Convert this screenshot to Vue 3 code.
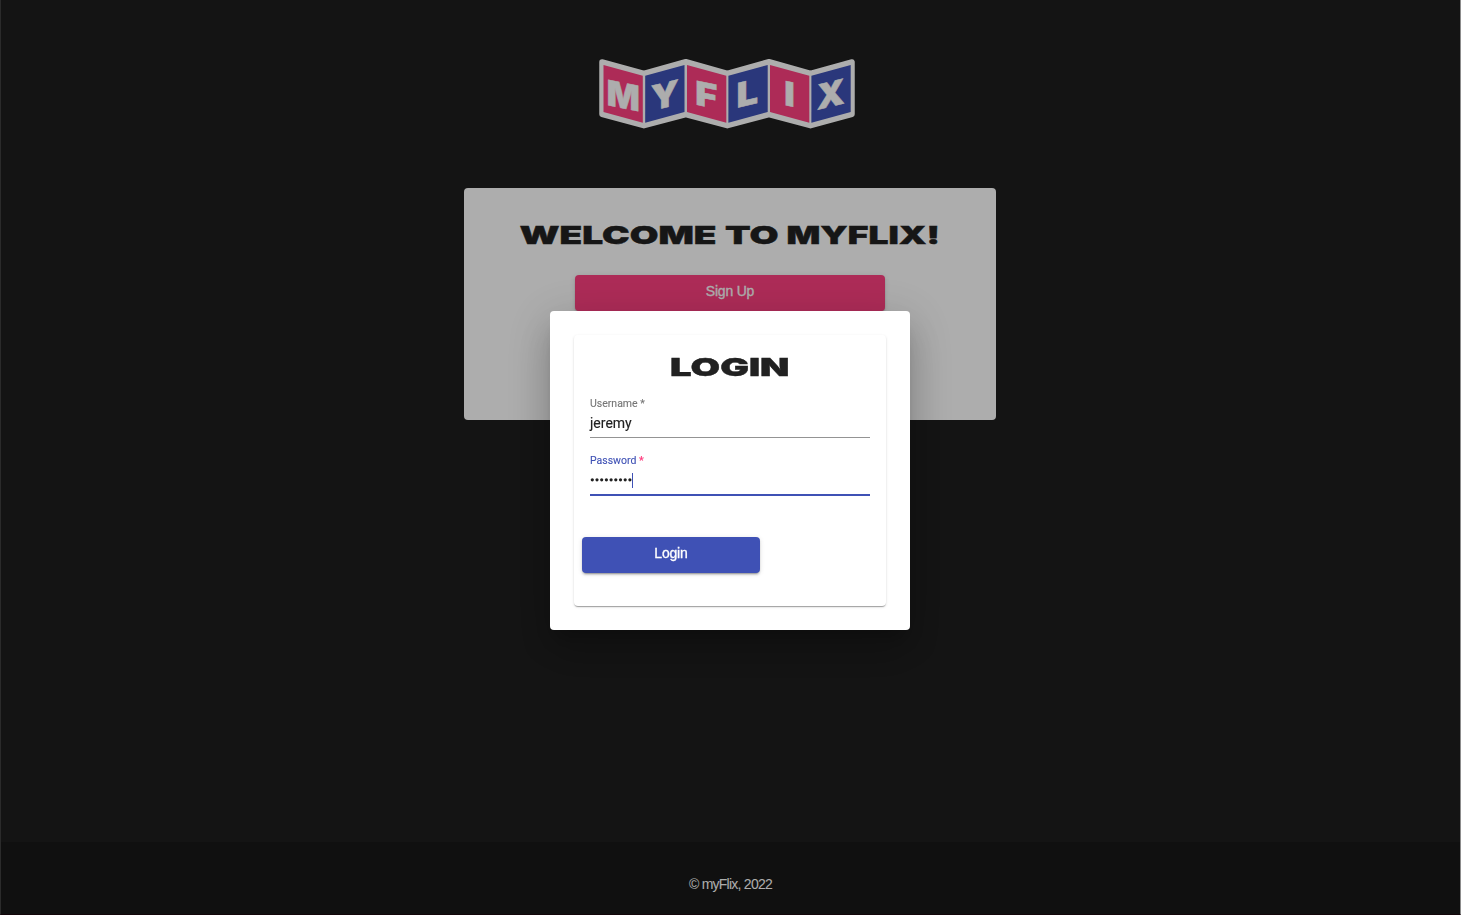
<script setup>
const panels = [
  { ch: 'M', x: 603.5, down: true, cx: 623.2, base: 108.2, w: 33, size: 35 },
  { ch: 'Y', x: 645.2, down: false, cx: 664.8, base: 107.7, w: 28, size: 34.5 },
  { ch: 'F', x: 687, down: true, cx: 706.2, base: 106.8, w: 22, size: 33 },
  { ch: 'L', x: 728.4, down: false, cx: 747.2, base: 105.5, w: 21.5, size: 34 },
  { ch: 'I', x: 770, down: true, cx: 789.5, base: 106, w: 10.5, size: 33.5 },
  { ch: 'X', x: 811.4, down: false, cx: 830.7, base: 106.6, w: 28, size: 34.5 },
]
const words = [
  { t: 'WELCOME', x: -0.5, w: 197 },
  { t: 'TO', x: 205, w: 53.5 },
  { t: 'MYFLIX!', x: 266.5, w: 153.5 },
]
const shape = (p) => {
  const l = p.down ? 65 : 75.7
  const r = p.down ? 75.7 : 65
  return `${p.x},${l} ${p.x + 39.3},${r} ${p.x + 39.3},${r + 47} ${p.x},${l + 47}`
}
const matrix = (p) => `matrix(1 ${p.down ? 0.2 : -0.24} 0 1 ${p.cx} ${p.base})`
</script>

<template>
  <div class="page">
    <header class="top">
      <svg class="logo" viewBox="597 56 260 75" width="260" height="75">
        <path
          class="frame"
          d="M602 62 L643.9 73.3 L685.8 61.7 L727.3 73.3 L769 61.7 L810.5 73.3 L852 62 L852 114.3 L810.5 125.7 L769 114.5 L727.3 125.7 L685.8 114.5 L643.9 125.7 L602 114.3 Z"
        />
        <g v-for="p in panels" :key="p.ch">
          <polygon :class="p.down ? 'pink' : 'blue'" :points="shape(p)" />
          <text
            class="letter"
            :transform="matrix(p)"
            text-anchor="middle"
            :font-size="p.size"
            :textLength="p.w"
            lengthAdjust="spacingAndGlyphs"
          >{{ p.ch }}</text>
        </g>
      </svg>
    </header>

    <main class="main">
      <section class="welcome">
        <svg class="wide-title" width="422" height="30" viewBox="0 0 422 30">
          <text
            v-for="w in words"
            :key="w.t"
            :x="w.x + 1"
            y="24"
            font-size="24.5"
            :textLength="w.w"
            lengthAdjust="spacingAndGlyphs"
          >{{ w.t }}</text>
        </svg>
        <button class="btn accent">Sign Up</button>
      </section>
    </main>

    <footer class="footer">© myFlix, 2022</footer>

    <div class="backdrop">
      <div class="dialog">
        <div class="card">
          <svg class="wide-title" width="122" height="30" viewBox="0 0 122 30">
            <text x="1" y="24" font-size="24.5" textLength="119.5" lengthAdjust="spacingAndGlyphs">LOGIN</text>
          </svg>
          <div class="field">
            <span class="label">Username *</span>
            <span class="value">jeremy</span>
          </div>
          <div class="field focused">
            <span class="label">Password <b>*</b></span>
            <span class="value">
              <svg class="dots" width="42" height="6" viewBox="0 0 42 6">
                <circle v-for="n in 9" :key="n" :cx="2.3 + (n - 1) * 4.7" cy="2.8" r="1.6" />
              </svg>
              <i class="caret"></i>
            </span>
          </div>
          <button class="btn primary">Login</button>
        </div>
      </div>
    </div>
  </div>
</template>

<style>
body { margin: 0; background: #1e1e1e; overflow: hidden; }
</style>

<style scoped>
.page {
  box-sizing: border-box;
  height: 915px;
  display: flex;
  flex-direction: column;
  background: #1e1e1e;
  border-left: 1px solid #404040;
  border-right: 1px solid #cfcfcf;
  border-bottom: 1px solid #1c080f;
  font-family: "Liberation Sans", Arial, sans-serif;
}
.top { display: flex; justify-content: center; padding: 56px 7px 0 0; height: 132px; box-sizing: content-box; }
.logo { display: block; }
.frame { fill: #fff; stroke: #fff; stroke-width: 5.5; stroke-linejoin: round; }
.pink { fill: #ff4081; }
.blue { fill: #3f51b5; }
.letter { fill: #fff; font-family: Inter, sans-serif; font-weight: 900; stroke: #fff; stroke-width: 0.5; }
.main { flex: 1; display: flex; justify-content: center; align-items: flex-start; padding-right: 1px; }
.welcome {
  box-sizing: border-box;
  width: 532px;
  height: 232px;
  padding-top: 32px;
  border-radius: 4px;
  background: #fff;
  display: flex;
  flex-direction: column;
  align-items: center;
}
.wide-title { display: block; flex: none; fill: #212121; font-family: Inter, sans-serif; font-weight: 900; stroke: #212121; stroke-width: 0.4; }
.btn {
  box-sizing: border-box;
  height: 36px;
  border: 0;
  border-radius: 4px;
  padding: 0 0 4px;
  color: #fff;
  font: 14px "Liberation Sans", Arial, sans-serif;
  -webkit-text-stroke: 0.3px #fff;
  letter-spacing: -0.2px;
  box-shadow: 0 3px 1px -2px rgba(0,0,0,.2), 0 2px 2px rgba(0,0,0,.14), 0 1px 5px rgba(0,0,0,.12);
}
.accent { width: 310px; margin-top: 25px; background: #ff4081; }
.footer {
  box-sizing: border-box;
  height: 72px;
  padding: 34px 0 0;
  background: #181818;
  color: #fff;
  text-align: center;
  font-size: 14px;
  line-height: 16px;
  letter-spacing: -0.75px;
}
.backdrop {
  position: fixed;
  inset: 0;
  background: rgba(0,0,0,.32);
  display: flex;
  justify-content: center;
  align-items: flex-start;
  padding: 311px 1px 0 0;
}
.dialog {
  box-sizing: border-box;
  width: 360px;
  height: 319px;
  padding: 24px;
  border-radius: 4px;
  background: #fff;
  box-shadow: 0 11px 15px -7px rgba(0,0,0,.2), 0 24px 38px 3px rgba(0,0,0,.14), 0 9px 46px 8px rgba(0,0,0,.12);
}
.card {
  box-sizing: border-box;
  height: 271px;
  padding: 17px 16px 0;
  border-radius: 4px;
  display: flex;
  flex-direction: column;
  box-shadow: 0 2px 1px -1px rgba(0,0,0,.2), 0 1px 1px rgba(0,0,0,.14), 0 1px 3px rgba(0,0,0,.12);
}
.card .wide-title { align-self: center; }
.field {
  box-sizing: border-box;
  display: flex;
  flex-direction: column;
  height: 41px;
  margin-top: 15px;
  border-bottom: 1px solid #949494;
  font-family: Roboto, sans-serif;
}
.field.focused { height: 42px; border-bottom: 2px solid #3f51b5; margin-top: 16px; }
.label { font-size: 10.5px; line-height: 14px; color: #757575; -webkit-text-stroke: 0.1px currentColor; }
.focused .label { color: #3f51b5; }
.label b { color: #ff4081; font-weight: 700; }
.value { display: flex; align-items: center; height: 16px; margin-top: 4px; font-size: 14px; line-height: 16px; color: #212121; -webkit-text-stroke: 0.15px currentColor; }
.dots { display: block; fill: #212121; }
.caret { width: 1px; height: 15px; background: #3f51b5; }
.primary { width: 178px; margin: 41px 0 0 -8px; background: #3f51b5; }
</style>
